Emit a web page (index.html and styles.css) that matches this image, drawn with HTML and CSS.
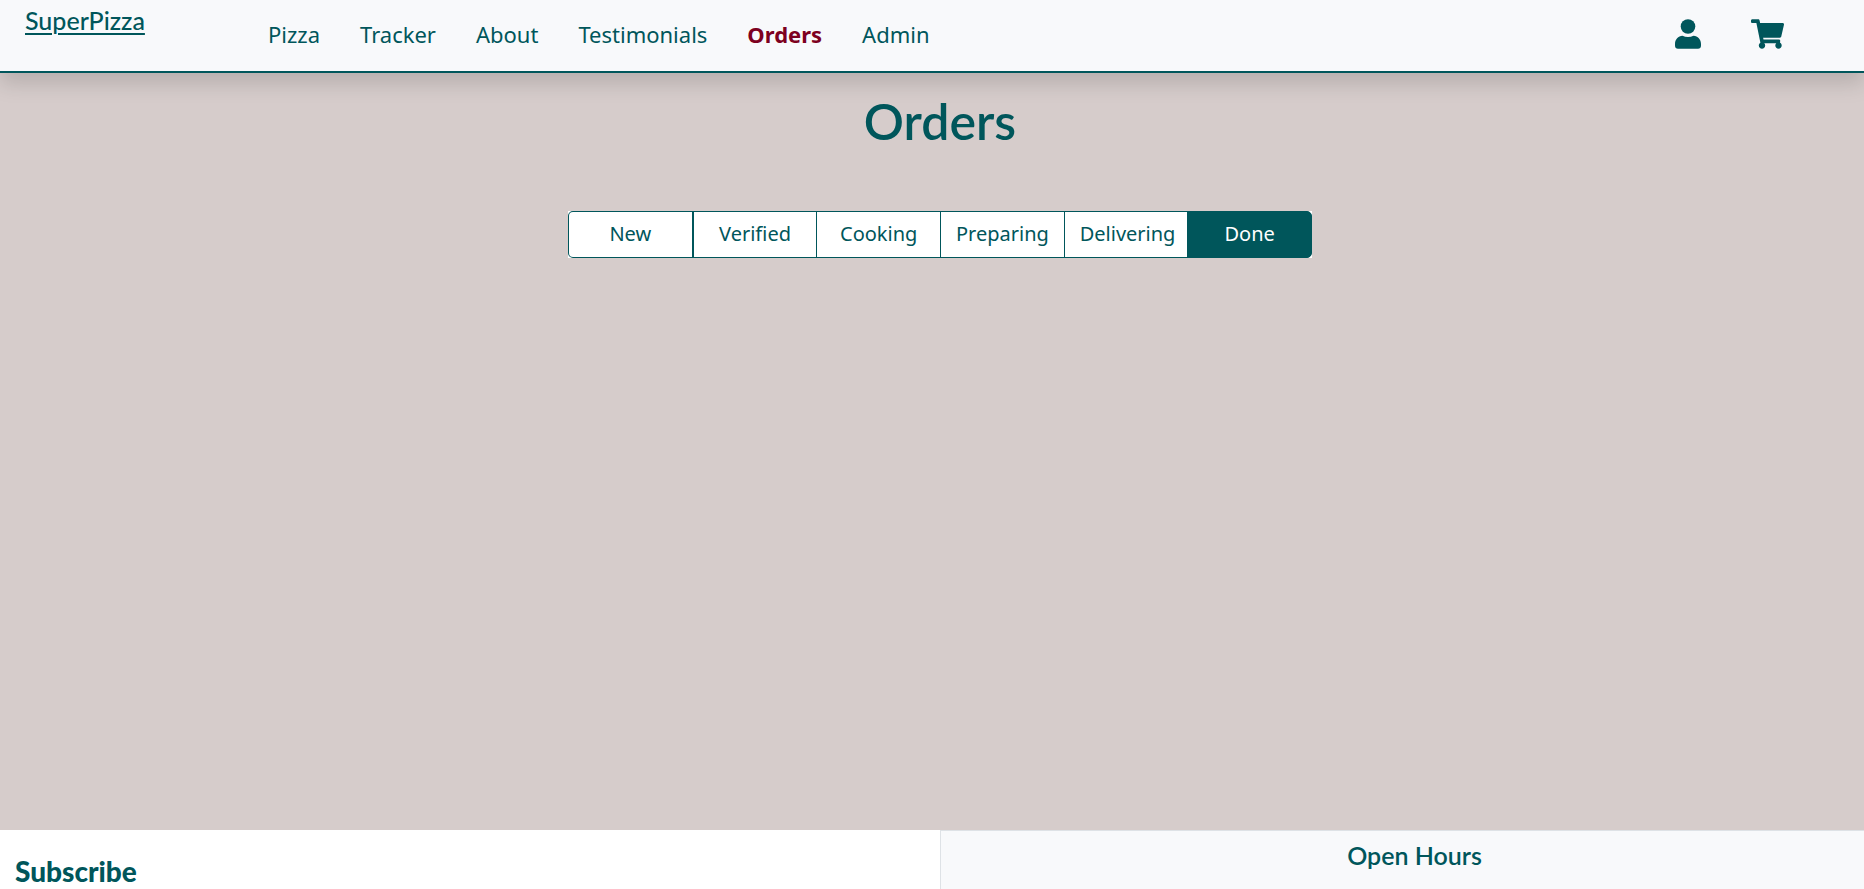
FILE: index.html
```html
<!DOCTYPE html>
<html lang="en">
<head>
<meta charset="utf-8">
<meta name="viewport" content="width=device-width, initial-scale=1">
<title>SuperPizza - Orders</title>
<link rel="stylesheet" href="styles.css">
</head>
<body>
<header class="header">
  <a class="brand" href="#">SuperPizza</a>
  <nav class="nav" aria-label="Main">
    <a class="nav-link" href="#">Pizza</a>
    <a class="nav-link" href="#">Tracker</a>
    <a class="nav-link" href="#">About</a>
    <a class="nav-link" href="#">Testimonials</a>
    <a class="nav-link active" href="#" aria-current="page">Orders</a>
    <a class="nav-link" href="#">Admin</a>
  </nav>
  <div class="actions">
    <a class="icon-link" href="#" aria-label="Account">
      <svg class="icon-user" viewBox="0 0 26 30" aria-hidden="true"><circle cx="13" cy="7.500" r="7.300"/><path d="M7.500 16.800C3.200 17 0 20.400 0 25v1.500C0 28.700 1.200 29.800 3 29.800h20c1.800 0 3-1.100 3-3.300V25c0-4.600-3.200-8-7.500-8.200-1.700.8-3.500 1.200-5.500 1.200s-3.800-.4-5.500-1.200z"/></svg>
    </a>
    <a class="icon-link" href="#" aria-label="Cart">
      <svg class="icon-cart" viewBox="0 0 576 512" aria-hidden="true"><path d="M528.120 301.319l47.273-208C578.806 78.301 567.391 64 551.990 64H159.208l-9.166-44.810C147.758 8.021 137.930 0 126.529 0H24C10.745 0 0 10.745 0 24v16c0 13.255 10.745 24 24 24h69.883l70.248 343.435C147.325 417.100 136 435.222 136 456c0 30.928 25.072 56 56 56s56-25.072 56-56c0-15.674-6.447-29.835-16.824-40h209.647C430.447 426.165 424 440.326 424 456c0 30.928 25.072 56 56 56s56-25.072 56-56c0-22.172-12.888-41.332-31.579-50.405l5.517-24.276c3.413-15.018-8.002-29.319-23.403-29.319H218.117l-6.545-32h293.145c11.206 0 20.920-7.754 23.403-18.681z"/></svg>
    </a>
  </div>
</header>
<main class="main">
  <h1 class="title">Orders</h1>
  <div class="filters" role="radiogroup" aria-label="Order status">
    <input class="check" type="radio" name="status" id="new"><label class="filter" for="new">New</label>
    <input class="check" type="radio" name="status" id="verified"><label class="filter" for="verified">Verified</label>
    <input class="check" type="radio" name="status" id="cooking"><label class="filter" for="cooking">Cooking</label>
    <input class="check" type="radio" name="status" id="preparing"><label class="filter" for="preparing">Preparing</label>
    <input class="check" type="radio" name="status" id="delivering"><label class="filter" for="delivering">Delivering</label>
    <input class="check" type="radio" name="status" id="done" checked><label class="filter" for="done">Done</label>
  </div>
</main>
<footer class="footer">
  <section class="subscribe"><h2 class="subscribe-title">Subscribe</h2></section>
  <section class="hours"><h2 class="hours-title">Open Hours</h2></section>
</footer>
</body>
</html>
```
FILE: styles.css
```css
* {
  box-sizing: border-box;
}

body {
  margin: 0;
  min-height: 100vh;
  display: flex;
  flex-direction: column;
  background: #d6cccb;
  color: #00565b;
  font-family: "Noto Sans", sans-serif;
  font-size: 20px;
  line-height: 30px;
}

h1,
h2 {
  margin: 0;
}

.header {
  display: flex;
  align-items: center;
  min-height: 73px;
  padding: 0 80px 0 25px;
  background: #f8f9fb;
  border-bottom: 2px solid #00565b;
  box-shadow: 0 10px 20px rgba(0, 0, 0, 0.15);
}

.brand {
  align-self: flex-start;
  width: 243px;
  padding-top: 4px;
  color: inherit;
  font-family: Lato, sans-serif;
  font-size: 25px;
  font-weight: 500;
  line-height: 32px;
  text-underline-offset: 3px;
  text-decoration-thickness: 2px;
}

.nav {
  display: flex;
  gap: 40px;
  padding-bottom: 4px;
}

.nav-link {
  color: inherit;
  font-size: 22px;
  text-decoration: none;
}

.nav-link.active {
  color: #7d0020;
  font-weight: 700;
}

.actions {
  display: flex;
  align-items: center;
  gap: 50px;
  margin-left: auto;
  padding-bottom: 4px;
}

.icon-link {
  display: flex;
  color: inherit;
}

.icon-link svg {
  display: block;
  height: 30px;
  fill: currentColor;
}

.icon-user {
  width: 26px;
}

.icon-cart {
  width: 33px;
}

.main {
  flex: 1;
  display: flex;
  flex-direction: column;
  align-items: center;
  padding: 18px 0 0 16px;
}

.title {
  font-family: Lato, sans-serif;
  font-size: 50px;
  font-weight: 600;
  line-height: 60px;
}

.filters {
  display: flex;
  width: 744px;
  max-width: 100%;
  margin-top: 60px;
  background: #fff;
}

.check {
  position: absolute;
  opacity: 0;
  pointer-events: none;
}

.filter {
  flex: 1 1 0;
  min-width: 0;
  margin-left: -1px;
  padding: 7px 15px 9px;
  border: 1px solid #00565b;
  white-space: nowrap;
  text-align: center;
  line-height: 29px;
  cursor: pointer;
}

.filter:first-of-type {
  margin-left: 0;
  border-right-width: 2px;
  border-radius: 5px 0 0 5px;
}

.filter:last-of-type {
  border-radius: 0 5px 5px 0;
}

.check:checked + .filter {
  background: #00565b;
  color: #fff;
}

.check:focus-visible + .filter {
  outline: 3px solid #7fb0b3;
}

.footer {
  display: grid;
  grid-template-columns: calc(50% + 8px) 1fr;
  font-family: Lato, sans-serif;
}

.subscribe {
  padding: 24px 15px 0;
  background: #fff;
}

.subscribe-title {
  font-size: 28px;
  font-weight: 900;
  line-height: 35px;
}

.hours {
  padding: 8px 0 0 24px;
  background: #f8f9fb;
  border: solid #dee2e6;
  border-width: 1px 0 0 1px;
  text-align: center;
}

.hours-title {
  font-size: 25px;
  font-weight: 600;
  line-height: 32px;
}
```
